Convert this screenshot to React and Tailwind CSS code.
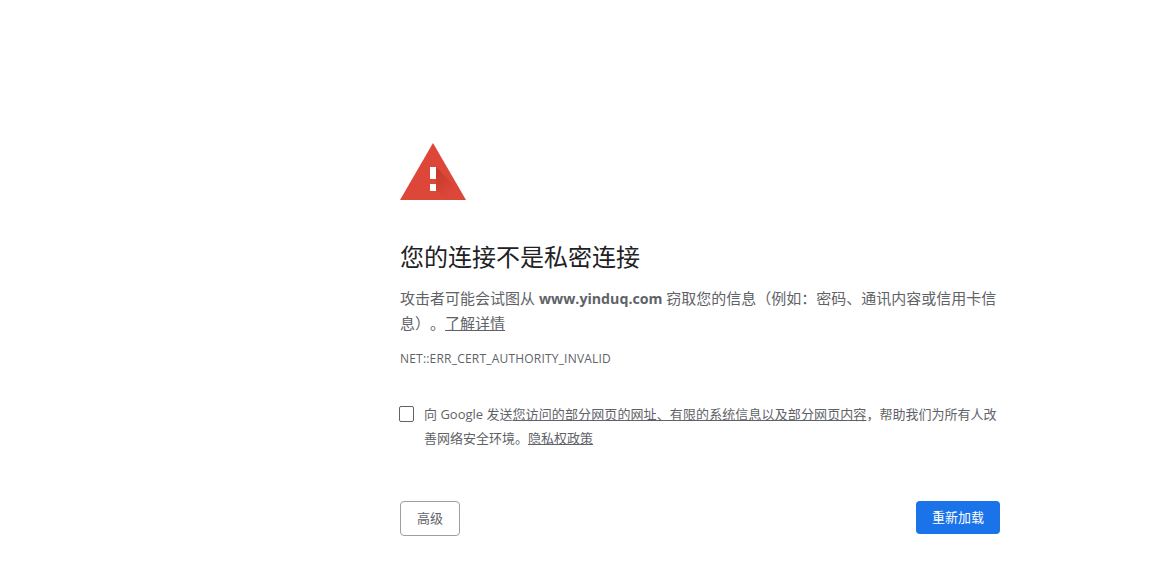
export default function App() {
  return (
    <div className="min-h-[581px] bg-white font-['Open_Sans','Noto_Sans_CJK_SC',sans-serif] text-[#5f6368]">
      <div className="ml-[400px] w-[600px] pt-[143px]">
        <svg width="66" height="57" viewBox="0 0 66 57" className="block">
          <defs>
            <linearGradient id="warning-shadow" gradientUnits="userSpaceOnUse" x1="34" y1="32" x2="52" y2="50">
              <stop offset="0" stopColor="#a52714" stopOpacity="0.4" />
              <stop offset="1" stopColor="#a52714" stopOpacity="0" />
            </linearGradient>
          </defs>
          <path d="M33 0 L66 57 L0 57 Z" fill="#dd4739" />
          <path d="M36 24 L60 48 L60 57 L46 57 L30 41 L36 41 Z" fill="url(#warning-shadow)" />
          <rect x="30" y="24" width="6" height="12" fill="#fff" />
          <rect x="30" y="41" width="6" height="7" fill="#fff" />
        </svg>
        <h1 className="mt-[42px] text-[24px] leading-[30px] font-normal text-[#202124]">您的连接不是私密连接</h1>
        <p className="mt-[14px] text-[15px] leading-[25px] [text-spacing-trim:space-all]">
          攻击者可能会试图从 <strong className="text-[14.2px] font-bold">www.yinduq.com</strong> 窃取您的信息（例如：密码、通讯内容或信用卡信息）。<span className="underline">了解详情</span>
        </p>
        <p className="mt-[15px] text-[12px] leading-[16px] tracking-[0.2px]">NET::ERR_CERT_AUTHORITY_INVALID</p>
        <div className="mt-[35px] flex">
          <div className="mt-[4px] -ml-px h-[16px] w-[15px] shrink-0 rounded-[2px] border border-[#5f6368]" />
          <p className="ml-[10px] text-[13px] leading-[24px]">
            向 Google 发送<span className="underline tracking-[0.11px]">您访问的部分网页的网址、有限的系统信息以及部分网页内容</span>，帮助我们为所有人改善网络安全环境。<span className="underline">隐私权政策</span>
          </p>
        </div>
        <div className="mt-[51px] flex items-start justify-between">
          <button className="h-[35px] w-[60px] rounded-[4px] border border-[#9aa0a6] bg-white text-[13px]">高级</button>
          <button className="h-[33px] w-[84px] rounded-[4px] bg-[#1a73e8] text-[13px] text-white">重新加载</button>
        </div>
      </div>
    </div>
  );
}
